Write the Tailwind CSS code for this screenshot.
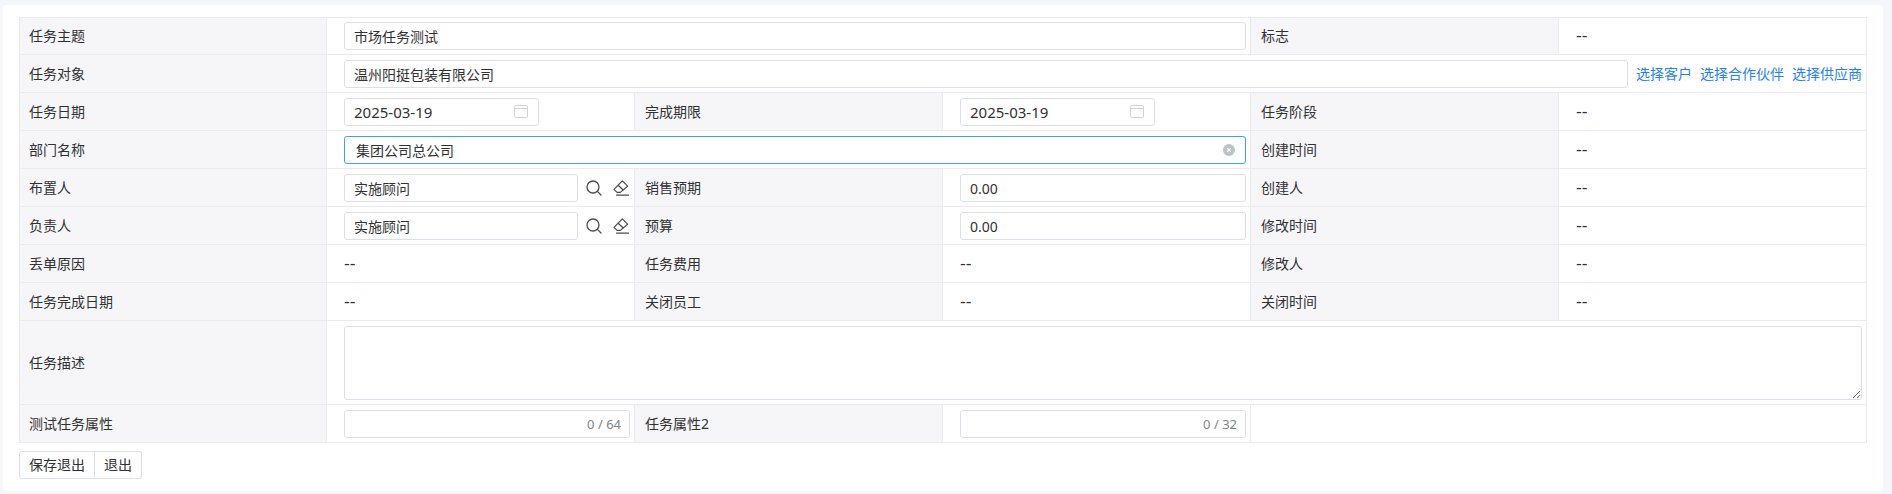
<!DOCTYPE html>
<html lang="zh-CN">
<head>
<meta charset="utf-8">
<title>市场任务</title>
<script src="https://cdn.jsdelivr.net/npm/@tailwindcss/browser@4"></script>
</head>
<body class="min-h-screen bg-[#f5f6f9] pt-[5px] pr-[9px] pl-[3px] font-['Noto_Sans','Noto_Sans_CJK_SC',sans-serif] text-sm text-[#303133]">
<svg class="hidden">
  <symbol id="search" viewBox="0 0 16 16"><g fill="none" stroke="#4a4c50" stroke-width="1.3" stroke-linecap="round"><circle cx="7" cy="7" r="6"/><path d="M11.4 11.4 15 15"/></g></symbol>
  <symbol id="eraser" viewBox="0 0 16 16"><g fill="none" stroke="#4a4c50" stroke-width="1.2" stroke-linejoin="round" stroke-linecap="round"><path d="M9.3.9 14.6 6.2 7.3 12.4H4.1L1 9.4ZM5.2 5.2l5 4.8M3.5 15.2H15.6"/></g></symbol>
  <symbol id="calendar" viewBox="0 0 14 14"><g fill="none" stroke="#d0d2d6"><rect x=".5" y="1.5" width="13" height="12" rx="1"/><path d="M.5 4.5h13"/></g></symbol>
</svg>
<main class="rounded bg-white px-4 pt-3 pb-3">
<form>
<table class="w-full table-fixed border-separate border-spacing-0 [&_tr>:first-child]:border-l [&_tr>:first-child]:pl-[9px] [&_td]:border-r [&_td]:border-b [&_td]:border-[#ebebef] [&_td]:pt-[5px] [&_td]:pr-1 [&_td]:pb-1 [&_td]:pl-[17px] [&_th]:border-r [&_th]:border-b [&_th]:border-[#ebebef] [&_th]:bg-[#f6f6f9] [&_th]:py-0 [&_th]:pl-[10px] [&_th]:text-left [&_th]:font-normal [&_tr]:h-[38px] [&_input]:h-7 [&_input]:rounded-[3px] [&_input]:border [&_input]:border-[#dcdfe6] [&_input]:px-[9px] [&_input]:outline-none">
<tbody>
<tr class="[&>*]:border-t">
  <th scope="row"><label for="subject">任务主题</label></th>
  <td colspan="3" class="!pt-1"><input id="subject" class="block w-full" value="市场任务测试"></td>
  <th scope="row">标志</th><td class="!py-0 font-['DejaVu_Sans',sans-serif] text-base leading-5">--</td>
</tr>
<tr>
  <th scope="row"><label for="target">任务对象</label></th>
  <td colspan="5"><div class="flex items-center gap-2 whitespace-nowrap text-[#1f82f5]"><input id="target" class="min-w-0 flex-1 text-[#303133]" value="温州阳挺包装有限公司"><a href="#">选择客户</a><a href="#">选择合作伙伴</a><a href="#">选择供应商</a></div></td>
</tr>
<tr>
  <th scope="row"><label for="start">任务日期</label></th>
  <td><div class="relative w-[195px]"><input id="start" class="block w-full text-[15px]" value="2025-03-19"><svg class="absolute top-[6px] right-[11px] size-[14px]"><use href="#calendar"/></svg></div></td>
  <th scope="row"><label for="due">完成期限</label></th>
  <td><div class="relative w-[195px]"><input id="due" class="block w-full text-[15px]" value="2025-03-19"><svg class="absolute top-[6px] right-[11px] size-[14px]"><use href="#calendar"/></svg></div></td>
  <th scope="row">任务阶段</th><td class="!py-0 font-['DejaVu_Sans',sans-serif] text-base leading-5">--</td>
</tr>
<tr>
  <th scope="row"><label for="dept">部门名称</label></th>
  <td colspan="3"><div class="relative"><input id="dept" class="block w-full !border-[#409eff] !pl-[11px]" value="集团公司总公司"><button type="button" aria-label="清除" class="absolute top-2 right-[11px] size-3"><svg viewBox="0 0 12 12" class="block size-3"><circle cx="6" cy="6" r="6" fill="#bfc1c5"/><path d="m4.2 4.2 3.6 3.6m0-3.6L4.2 7.8" stroke="#fff" stroke-width="1.2"/></svg></button></div></td>
  <th scope="row">创建时间</th><td class="!py-0 font-['DejaVu_Sans',sans-serif] text-base leading-5">--</td>
</tr>
<tr>
  <th scope="row"><label for="assigner">布置人</label></th>
  <td><div class="flex items-center gap-2 pr-px"><input id="assigner" class="min-w-0 flex-1" value="实施顾问"><div class="flex gap-[11px]"><button type="button" aria-label="查找"><svg class="block size-4"><use href="#search"/></svg></button><button type="button" aria-label="清空"><svg class="block size-4"><use href="#eraser"/></svg></button></div></div></td>
  <th scope="row"><label for="sales">销售预期</label></th>
  <td><input id="sales" class="block w-full" value="0.00"></td>
  <th scope="row">创建人</th><td class="!py-0 font-['DejaVu_Sans',sans-serif] text-base leading-5">--</td>
</tr>
<tr>
  <th scope="row"><label for="owner">负责人</label></th>
  <td><div class="flex items-center gap-2 pr-px"><input id="owner" class="min-w-0 flex-1" value="实施顾问"><div class="flex gap-[11px]"><button type="button" aria-label="查找"><svg class="block size-4"><use href="#search"/></svg></button><button type="button" aria-label="清空"><svg class="block size-4"><use href="#eraser"/></svg></button></div></div></td>
  <th scope="row"><label for="budget">预算</label></th>
  <td><input id="budget" class="block w-full" value="0.00"></td>
  <th scope="row">修改时间</th><td class="!py-0 font-['DejaVu_Sans',sans-serif] text-base leading-5">--</td>
</tr>
<tr>
  <th scope="row">丢单原因</th><td class="!py-0 font-['DejaVu_Sans',sans-serif] text-base leading-5">--</td>
  <th scope="row">任务费用</th><td class="!py-0 font-['DejaVu_Sans',sans-serif] text-base leading-5">--</td>
  <th scope="row">修改人</th><td class="!py-0 font-['DejaVu_Sans',sans-serif] text-base leading-5">--</td>
</tr>
<tr>
  <th scope="row">任务完成日期</th><td class="!py-0 font-['DejaVu_Sans',sans-serif] text-base leading-5">--</td>
  <th scope="row">关闭员工</th><td class="!py-0 font-['DejaVu_Sans',sans-serif] text-base leading-5">--</td>
  <th scope="row">关闭时间</th><td class="!py-0 font-['DejaVu_Sans',sans-serif] text-base leading-5">--</td>
</tr>
<tr>
  <th scope="row"><label for="desc">任务描述</label></th>
  <td colspan="5"><textarea id="desc" class="block h-[74px] w-full resize rounded-[3px] border border-[#dcdfe6] px-[9px] outline-none"></textarea></td>
</tr>
<tr>
  <th scope="row"><label for="attr1">测试任务属性</label></th>
  <td><div class="relative"><input id="attr1" maxlength="64" class="block w-full"><span class="absolute top-1 right-[9px] text-[13px] leading-5 text-[#808388]">0 / 64</span></div></td>
  <th scope="row"><label for="attr2">任务属性2</label></th>
  <td><div class="relative"><input id="attr2" maxlength="32" class="block w-full"><span class="absolute top-1 right-[9px] text-[13px] leading-5 text-[#808388]">0 / 32</span></div></td>
  <td colspan="2"></td>
</tr>
</tbody>
</table>
<div class="mt-2 flex">
  <button type="submit" class="h-7 rounded-l-[3px] border border-[#dcdfe6] px-[9px]">保存退出</button>
  <button type="button" class="h-7 rounded-r-[3px] border border-l-0 border-[#dcdfe6] px-[9px]">退出</button>
</div>
</form>
</main>
</body>
</html>
